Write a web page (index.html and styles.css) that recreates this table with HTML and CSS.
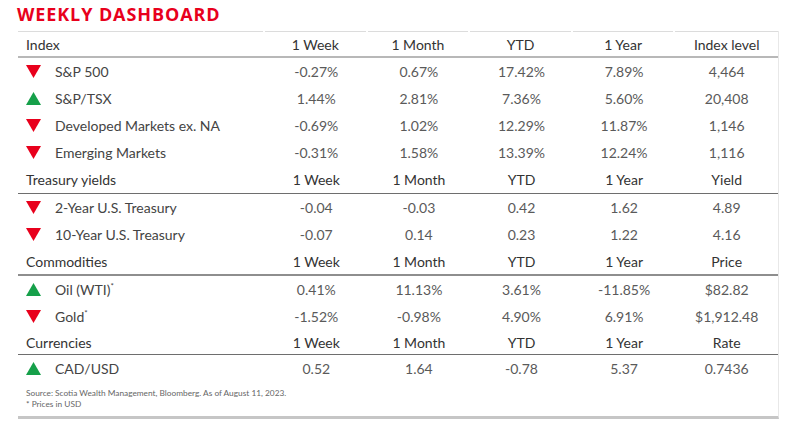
FILE: index.html
```html
<!DOCTYPE html>
<html lang="en">
<head>
<meta charset="utf-8">
<title>Weekly Dashboard</title>
<link rel="stylesheet" href="styles.css">
</head>
<body>
<h1 class="title">WEEKLY DASHBOARD</h1>
<div class="board">
  <div class="row head top">
    <div class="c name">Index</div><div class="c">1 Week</div><div class="c">1 Month</div><div class="c">YTD</div><div class="c">1 Year</div><div class="c">Index level</div>
  </div>
  <div class="row">
    <div class="c name"><svg class="tri" viewBox="0 0 15 13"><polygon points="0,0 15,0 7.5,13" fill="#e8001c"/></svg>S&amp;P 500</div><div class="c">-0.27%</div><div class="c">0.67%</div><div class="c">17.42%</div><div class="c">7.89%</div><div class="c">4,464</div>
  </div>
  <div class="row">
    <div class="c name"><svg class="tri" viewBox="0 0 15 13"><polygon points="7.5,0 15,13 0,13" fill="#16a04a"/></svg>S&amp;P/TSX</div><div class="c">1.44%</div><div class="c">2.81%</div><div class="c">7.36%</div><div class="c">5.60%</div><div class="c">20,408</div>
  </div>
  <div class="row">
    <div class="c name"><svg class="tri" viewBox="0 0 15 13"><polygon points="0,0 15,0 7.5,13" fill="#e8001c"/></svg>Developed Markets ex. NA</div><div class="c">-0.69%</div><div class="c">1.02%</div><div class="c">12.29%</div><div class="c">11.87%</div><div class="c">1,146</div>
  </div>
  <div class="row">
    <div class="c name"><svg class="tri" viewBox="0 0 15 13"><polygon points="0,0 15,0 7.5,13" fill="#e8001c"/></svg>Emerging Markets</div><div class="c">-0.31%</div><div class="c">1.58%</div><div class="c">13.39%</div><div class="c">12.24%</div><div class="c">1,116</div>
  </div>
  <div class="row head thin">
    <div class="c name">Treasury yields</div><div class="c">1 Week</div><div class="c">1 Month</div><div class="c">YTD</div><div class="c">1 Year</div><div class="c">Yield</div>
  </div>
  <div class="row">
    <div class="c name"><svg class="tri" viewBox="0 0 15 13"><polygon points="0,0 15,0 7.5,13" fill="#e8001c"/></svg>2-Year U.S. Treasury</div><div class="c">-0.04</div><div class="c">-0.03</div><div class="c">0.42</div><div class="c">1.62</div><div class="c">4.89</div>
  </div>
  <div class="row">
    <div class="c name"><svg class="tri" viewBox="0 0 15 13"><polygon points="0,0 15,0 7.5,13" fill="#e8001c"/></svg>10-Year U.S. Treasury</div><div class="c">-0.07</div><div class="c">0.14</div><div class="c">0.23</div><div class="c">1.22</div><div class="c">4.16</div>
  </div>
  <div class="row head thick">
    <div class="c name">Commodities</div><div class="c">1 Week</div><div class="c">1 Month</div><div class="c">YTD</div><div class="c">1 Year</div><div class="c">Price</div>
  </div>
  <div class="row">
    <div class="c name"><svg class="tri" viewBox="0 0 15 13"><polygon points="7.5,0 15,13 0,13" fill="#16a04a"/></svg>Oil (WTI)<sup>*</sup></div><div class="c">0.41%</div><div class="c">11.13%</div><div class="c">3.61%</div><div class="c">-11.85%</div><div class="c">$82.82</div>
  </div>
  <div class="row">
    <div class="c name"><svg class="tri" viewBox="0 0 15 13"><polygon points="0,0 15,0 7.5,13" fill="#e8001c"/></svg>Gold<sup>*</sup></div><div class="c">-1.52%</div><div class="c">-0.98%</div><div class="c">4.90%</div><div class="c">6.91%</div><div class="c">$1,912.48</div>
  </div>
  <div class="row head thin short">
    <div class="c name">Currencies</div><div class="c">1 Week</div><div class="c">1 Month</div><div class="c">YTD</div><div class="c">1 Year</div><div class="c">Rate</div>
  </div>
  <div class="row">
    <div class="c name"><svg class="tri" viewBox="0 0 15 13"><polygon points="7.5,0 15,13 0,13" fill="#16a04a"/></svg>CAD/USD</div><div class="c">0.52</div><div class="c">1.64</div><div class="c">-0.78</div><div class="c">5.37</div><div class="c">0.7436</div>
  </div>
  <div class="foot">
    <p>Source: Scotia Wealth Management, Bloomberg. As of August 11, 2023.</p>
    <p>* Prices in USD</p>
  </div>
</div>
</body>
</html>
```

FILE: styles.css
```css
html, body {
  margin: 0;
  padding: 0;
  background: #ffffff;
}

body {
  font-family: Lato, "Open Sans", "Liberation Sans", sans-serif;
  color: #444;
}

.title {
  margin: 0;
  padding: 4px 0 0 17px;
  height: 27px;
  box-sizing: border-box;
  font-family: "Open Sans", "Liberation Sans", sans-serif;
  font-weight: 700;
  font-size: 18px;
  line-height: 20px;
  letter-spacing: 0.9px;
  color: #e8001c;
}

.board {
  margin: 4px 0 0 18px;
  width: 760px;
  border-right: 1px solid #e8e8e8;
  border-bottom: 3px solid #c6c6c6;
}

.row {
  display: grid;
  grid-template-columns: 247px repeat(5, 1fr);
  align-items: center;
  height: 27px;
  font-size: 14px;
  color: #5a5a5a;
}

.c {
  text-align: center;
  white-space: nowrap;
}

.c.name {
  text-align: left;
  padding-left: 8px;
  display: flex;
  align-items: center;
  color: #444;
}

.tri {
  width: 15px;
  height: 13px;
  margin-right: 14px;
  flex: none;
}

sup {
  font-size: 8px;
  line-height: 0;
  align-self: flex-start;
  margin-top: 5px;
}

.head,
.head .c.name {
  color: #333;
}

.top {
  height: 25px;
  border-bottom: 2px solid #b8b8b8;
}

.top .c {
  align-self: stretch;
  display: flex;
  align-items: center;
  justify-content: center;
  border-top: 1px solid #dcdcdc;
  margin-right: 2px;
}

.top .c.name {
  justify-content: flex-start;
}

.top .c:last-child {
  margin-right: 0;
}

.thin {
  border-bottom: 1px solid #6e6e6e;
}

.thick {
  height: 26px;
  border-bottom: 2px solid #8e8e8e;
}

.short {
  height: 24px;
}

.foot {
  padding: 6px 0 6px 8px;
  font-size: 8.3px;
  line-height: 11px;
  color: #666;
}

.foot p {
  margin: 0;
}
```
